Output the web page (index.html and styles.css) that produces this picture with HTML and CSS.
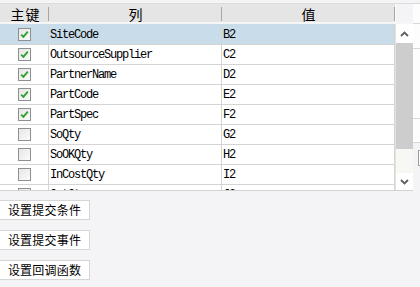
FILE: index.html
```html
<!DOCTYPE html>
<html lang="zh-CN">

<head>
    <meta charset="UTF-8">
    <meta name="viewport" content="width=device-width, initial-scale=1.0">
    <title>字段设置</title>
    <link rel="stylesheet" href="styles.css">
</head>

<body>
    <div class="grid-area">
        <div class="grid">
            <div class="grid-head">
                <div class="hcell col-key">主键</div>
                <div class="hcell col-name">列</div>
                <div class="hcell col-value">值</div>
                <div class="hcorner"></div>
            </div>
            <div class="grid-main">
                <div class="rows">
                    <div class="row selected">
                        <div class="cell col-key"><span class="check on"><svg viewBox="0 0 11 11"><path d="M2.2 5.6 L4.4 7.8 L8.8 2.6" /></svg></span></div>
                        <div class="cell col-name">SiteCode</div>
                        <div class="cell col-value">B2</div>
                    </div>
                    <div class="row">
                        <div class="cell col-key"><span class="check on"><svg viewBox="0 0 11 11"><path d="M2.2 5.6 L4.4 7.8 L8.8 2.6" /></svg></span></div>
                        <div class="cell col-name">OutsourceSupplier</div>
                        <div class="cell col-value">C2</div>
                    </div>
                    <div class="row">
                        <div class="cell col-key"><span class="check on"><svg viewBox="0 0 11 11"><path d="M2.2 5.6 L4.4 7.8 L8.8 2.6" /></svg></span></div>
                        <div class="cell col-name">PartnerName</div>
                        <div class="cell col-value">D2</div>
                    </div>
                    <div class="row">
                        <div class="cell col-key"><span class="check on"><svg viewBox="0 0 11 11"><path d="M2.2 5.6 L4.4 7.8 L8.8 2.6" /></svg></span></div>
                        <div class="cell col-name">PartCode</div>
                        <div class="cell col-value">E2</div>
                    </div>
                    <div class="row">
                        <div class="cell col-key"><span class="check on"><svg viewBox="0 0 11 11"><path d="M2.2 5.6 L4.4 7.8 L8.8 2.6" /></svg></span></div>
                        <div class="cell col-name">PartSpec</div>
                        <div class="cell col-value">F2</div>
                    </div>
                    <div class="row">
                        <div class="cell col-key"><span class="check"></span></div>
                        <div class="cell col-name">SoQty</div>
                        <div class="cell col-value">G2</div>
                    </div>
                    <div class="row">
                        <div class="cell col-key"><span class="check"></span></div>
                        <div class="cell col-name">SoOKQty</div>
                        <div class="cell col-value">H2</div>
                    </div>
                    <div class="row">
                        <div class="cell col-key"><span class="check"></span></div>
                        <div class="cell col-name">InCostQty</div>
                        <div class="cell col-value">I2</div>
                    </div>
                    <div class="row">
                        <div class="cell col-key"><span class="check"></span></div>
                        <div class="cell col-name">OutQty</div>
                        <div class="cell col-value">J2</div>
                    </div>
                </div>
                <div class="vscroll">
                    <div class="vs-btn up"><svg viewBox="0 0 9 6"><path d="M1 5 L4.5 1.5 L8 5" /></svg></div>
                    <div class="vs-thumb"></div>
                    <div class="vs-track"></div>
                    <div class="vs-btn down"><svg viewBox="0 0 9 6"><path d="M1 1 L4.5 4.5 L8 1" /></svg></div>
                </div>
            </div>
        </div>
        <div class="side">
            <div class="side-row r1"></div>
            <div class="side-row r2"></div>
            <div class="side-row r3"></div>
            <div class="side-row r4"></div>
            <div class="side-row r5"></div>
            <div class="side-box"></div>
        </div>
    </div>

    <div class="actions">
        <button class="btn">设置提交条件</button>
        <button class="btn">设置提交事件</button>
        <button class="btn">设置回调函数</button>
    </div>
</body>

</html>
```

FILE: styles.css
```css
/* Global */
body {
    margin: 0;
    background-color: #f4f4f6;
    font-family: "Noto Sans CJK SC", sans-serif;
    color: #000;
}

/* Grid area */
.grid-area {
    display: flex;
    padding-top: 3px;
}

.grid {
    width: 413px;
    border-bottom: 1px solid #d2d2d2;
}

/* Header */
.grid-head {
    display: flex;
    height: 18px;
    border-top: 1px solid #dcdcdc;
    border-bottom: 2px solid #f6f6f6;
    background-color: #e5e5e5;
}

.hcell {
    box-sizing: border-box;
    display: flex;
    justify-content: center;
    align-items: flex-end;
    font-size: 14px;
    line-height: 16px;
    background-image: linear-gradient(#a6a6a6, #a6a6a6);
    background-repeat: no-repeat;
    background-position: right 0 top 3px;
    background-size: 1px 14px;
}

.hcell.col-key {
    letter-spacing: 1px;
    padding-left: 2px;
}

.hcorner {
    width: 18px;
    background-color: #f4f4f6;
    border-left: 1px solid #fafafa;
    box-sizing: border-box;
}

/* Body rows */
.grid-main {
    display: flex;
}

.rows {
    width: 395px;
    height: 166px;
    box-sizing: border-box;
    padding-top: 1px;
    overflow: hidden;
    background-color: #fff;
}

.row {
    display: flex;
    height: 20px;
    box-sizing: border-box;
    border-bottom: 1px solid #d4d4d4;
}

.row.selected {
    background-color: #c9dcea;
    box-shadow: 0 -1px 0 #c9dcea;
}

.cell {
    box-sizing: border-box;
    display: flex;
    align-items: center;
    border-right: 1px solid #d4d4d4;
    font-family: "Liberation Mono", monospace;
    font-size: 12px;
    letter-spacing: -1.2px;
}

.col-key {
    width: 49px;
    justify-content: center;
}

.col-name,
.col-value {
    width: 173px;
    padding-left: 1px;
}

.hcell.col-name,
.hcell.col-value {
    padding-left: 0;
}

/* Checkbox */
.check {
    width: 13px;
    height: 13px;
    box-sizing: border-box;
    border: 1px solid #8f8f8f;
    background: linear-gradient(135deg, #e6e6e6, #fbfbfb);
    display: flex;
}

.check svg {
    width: 11px;
    height: 11px;
}

.check path {
    fill: none;
    stroke: #2c9f2c;
    stroke-width: 1.8;
}

/* Scrollbar */
.vscroll {
    width: 18px;
    height: 166px;
    box-sizing: border-box;
    border-left: 1px solid #e4e4dc;
    display: flex;
    flex-direction: column;
}

.vs-btn {
    background-color: #fff;
    display: flex;
    justify-content: center;
    align-items: center;
}

.vs-btn.up {
    height: 19px;
}

.vs-btn.down {
    height: 17px;
}

.vs-btn svg {
    width: 9px;
    height: 6px;
}

.vs-btn path {
    fill: none;
    stroke: #606060;
    stroke-width: 1.8;
}

.vs-thumb {
    height: 106px;
    background-color: #cdcdcd;
}

.vs-track {
    height: 24px;
    background-color: #f7f7f3;
}

/* Neighbour panel on the right */
.side {
    width: 7px;
    display: flex;
    flex-direction: column;
}

.side-row {
    background-color: #fdfdfd;
    border-top: 1px solid #d8d8d8;
}

.side-row.r1 { height: 19px; }
.side-row.r2 { height: 24px; }
.side-row.r3 { height: 69px; }
.side-row.r4 { height: 23px; }
.side-row.r5 { height: 0; }

.side-box {
    margin-top: 7px;
    margin-left: 5px;
    width: 2px;
    height: 14px;
    border: 1px solid #9a9a9a;
    border-right: none;
    background-color: #fff;
}

/* Buttons */
.actions {
    display: flex;
    flex-direction: column;
    align-items: flex-start;
    gap: 10px;
    padding-top: 9px;
    margin-left: -1px;
}

.btn {
    width: 91px;
    height: 20px;
    box-sizing: border-box;
    padding: 0;
    border: 1px solid #d6d6d6;
    background-color: #fff;
    font-family: "Noto Sans CJK SC", sans-serif;
    font-size: 12px;
    line-height: 18px;
    letter-spacing: 0.2px;
    color: #000;
}
```
